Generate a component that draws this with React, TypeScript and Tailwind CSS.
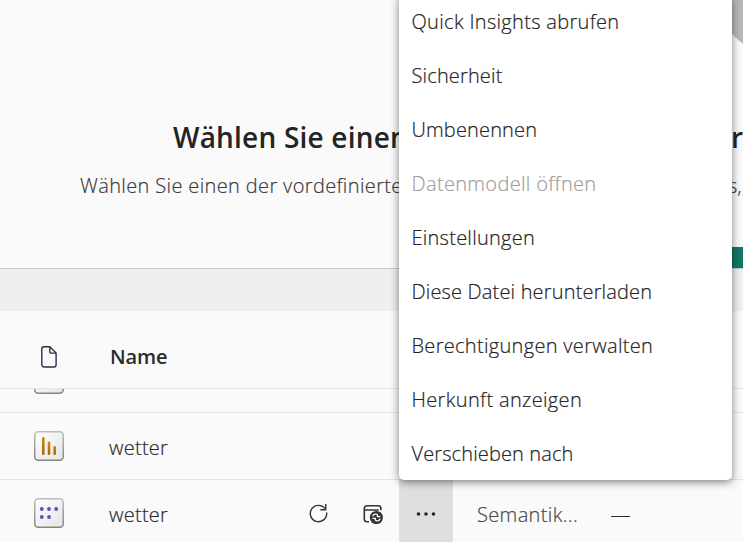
import type { ReactNode } from "react";

const menuItems = [
  { label: "Quick Insights abrufen", tracking: "tracking-[0.32px]" },
  { label: "Sicherheit", tracking: "tracking-[0.15px]" },
  { label: "Umbenennen", tracking: "tracking-[0.15px]" },
  { label: "Datenmodell öffnen", tracking: "tracking-[0.33px]", disabled: true },
  { label: "Einstellungen", tracking: "tracking-[0.25px]" },
  { label: "Diese Datei herunterladen", tracking: "tracking-[0.16px]" },
  { label: "Berechtigungen verwalten", tracking: "tracking-[0.31px]" },
  { label: "Herkunft anzeigen", tracking: "tracking-[0.35px]" },
  { label: "Verschieben nach", tracking: "tracking-[0.12px]" },
];

function Tile({ children }: { children?: ReactNode }) {
  return (
    <svg width="30" height="30" viewBox="0 0 30 30" className="ml-[34px] shrink-0">
      <defs>
        <linearGradient id="tileFill" x1="0" y1="0" x2="1" y2="1">
          <stop offset="0" stopColor="#ffffff" />
          <stop offset="1" stopColor="#e4e4e4" />
        </linearGradient>
        <linearGradient id="tileEdge" x1="0" y1="0" x2="0" y2="1">
          <stop offset="0" stopColor="#bcbcbc" />
          <stop offset="1" stopColor="#858585" />
        </linearGradient>
        <linearGradient id="barFill" x1="0" y1="0" x2="0" y2="1">
          <stop offset="0" stopColor="#d08a10" />
          <stop offset="1" stopColor="#a96500" />
        </linearGradient>
      </defs>
      <rect x="0.75" y="0.75" width="28.5" height="28.5" rx="3.5" fill="url(#tileFill)" stroke="url(#tileEdge)" strokeWidth="1.5" />
      {children}
    </svg>
  );
}

function DocumentIcon() {
  return (
    <svg width="16" height="22" viewBox="0 0 16 22" fill="none" stroke="#333" strokeWidth="1.4" className="ml-[41px] shrink-0">
      <path d="M3 .8h5.8L15.1 7v11.8a2.2 2.2 0 0 1-2.2 2.2H3a2.2 2.2 0 0 1-2.2-2.2V3A2.2 2.2 0 0 1 3 .8Z" stroke="#2f2b4d" />
      <path d="M8.8.9v4.3c0 1.1.8 1.9 1.9 1.9H15" />
    </svg>
  );
}

function RefreshIcon() {
  return (
    <svg width="20" height="20" viewBox="0 0 20 20" fill="none" stroke="#333" strokeWidth="1.4" className="shrink-0">
      <path d="M15.9 5.4A8.2 8.2 0 1 0 17.7 10.6V9.4" />
      <path d="M16.7 1v5.7h-5.4" />
    </svg>
  );
}

function ScheduleIcon() {
  return (
    <svg width="22" height="21" viewBox="0 0 22 21" fill="none" className="shrink-0">
      <path d="M7 18.8H5a2.7 2.7 0 0 1-2.7-2.7V5.5A2.7 2.7 0 0 1 5 2.8h11.2a2.7 2.7 0 0 1 2.7 2.7v1.7M2.3 7h14.4" stroke="#333" strokeWidth="1.6" />
      <circle cx="14.4" cy="14.5" r="6.6" fill="#333" />
      <path d="M10.6 13.2c1-2.4 3.6-2.6 4.9-1.2v1.6h2.9M18.2 15.8c-1 2.4-3.6 2.6-4.9 1.2v-1.6h-2.9" stroke="#fafafa" strokeWidth="1.3" />
    </svg>
  );
}

function ContextMenu() {
  return (
    <div className="absolute left-[399px] top-[-5px] flex h-[485px] w-[333px] flex-col rounded-[5px] bg-white shadow-[0_2px_9px_rgba(0,0,0,0.5)]">
      {menuItems.map((item) => (
        <div
          key={item.label}
          className={`flex h-[54px] shrink-0 items-center whitespace-nowrap pl-[12.5px] ${item.tracking} ${item.disabled ? "text-[#a0a0a0]" : "text-[#242424]"}`}
        >
          {item.label}
        </div>
      ))}
    </div>
  );
}

export default function App() {
  return (
    <div className="relative flex h-[542px] w-[743px] flex-col overflow-hidden bg-[#fafafa] font-['Open_Sans','Noto_Sans',sans-serif] text-[20px] font-light leading-[28px] text-[#2b2b2b] [-webkit-text-stroke:0.2px]">
      <section className="flex h-[269px] shrink-0 flex-col border-b border-[#c8c8c8]">
        <div className="flex h-[117px] shrink-0 justify-end">
          <svg width="43" height="60" viewBox="0 0 43 60">
            <path d="M0 0H43V44Q34 37 27 28Z" fill="#b8b8b8" />
          </svg>
        </div>
        <div className="flex h-[40px] shrink-0 items-center whitespace-nowrap pl-[173px] text-[28px] font-semibold text-[#242424] [-webkit-text-stroke:0]">
          <span className="w-[558px] tracking-[0.2px]">Wählen Sie einen</span>
          <span>r</span>
        </div>
        <div className="mt-[15px] flex h-[28px] shrink-0 items-center whitespace-nowrap pl-[80px] text-[#3a3a3a]">
          <span className="w-[648px] tracking-[0.36px]">Wählen Sie einen der vordefinierten</span>
          <span>s,</span>
        </div>
        <div className="mt-[47px] ml-auto h-[21px] w-[60px] bg-[#117865]" />
      </section>
      <div className="h-[42px] shrink-0 bg-[#efefef]" />
      <div className="flex h-[78px] shrink-0 items-center border-b border-[#e4e4e4] pt-[14px]">
        <DocumentIcon />
        <span className="ml-[53px] text-[20px] font-semibold tracking-[-0.1px] [-webkit-text-stroke:0]">Name</span>
      </div>
      <div className="flex h-[24px] shrink-0 items-end overflow-hidden border-b border-[#e4e4e4] pb-[18px]">
        <Tile />
      </div>
      <div className="flex h-[67px] shrink-0 items-center border-b border-[#e4e4e4]">
        <Tile>
          <g fill="url(#barFill)">
            <rect x="8" y="6" width="2.6" height="18" rx="1.3" />
            <rect x="13.7" y="10.5" width="2.6" height="13.5" rx="1.3" />
            <rect x="19.4" y="15" width="2.6" height="9" rx="1.3" />
          </g>
        </Tile>
        <span className="ml-[45px] pt-[3px] tracking-[0.25px]">wetter</span>
      </div>
      <div className="flex h-[66px] shrink-0 items-center">
        <Tile>
          <g fill="#6b46b8">
            <circle cx="7.8" cy="11" r="1.9" />
            <circle cx="15" cy="11" r="1.9" />
            <circle cx="22.2" cy="11" r="1.9" />
            <circle cx="7.8" cy="19" r="1.9" />
            <circle cx="15" cy="19" r="1.9" />
          </g>
        </Tile>
        <span className="ml-[45px] w-[200px] pt-[3px] tracking-[0.25px]">wetter</span>
        <RefreshIcon />
        <div className="ml-[33px] pt-px"><ScheduleIcon /></div>
        <div className="ml-[15px] flex h-full w-[54px] shrink-0 items-center justify-center bg-[#e1dfdd] pt-px">
          <svg width="20" height="6" viewBox="0 0 20 6" fill="#242424">
            <circle cx="2.5" cy="3" r="1.8" />
            <circle cx="10" cy="3" r="1.8" />
            <circle cx="17.5" cy="3" r="1.8" />
          </svg>
        </div>
        <span className="ml-[24px] w-[133.5px] pt-[3px] tracking-[0.36px] text-[#484848]">Semantik...</span>
        <span className="pt-[3px]">—</span>
      </div>
      <ContextMenu />
    </div>
  );
}
